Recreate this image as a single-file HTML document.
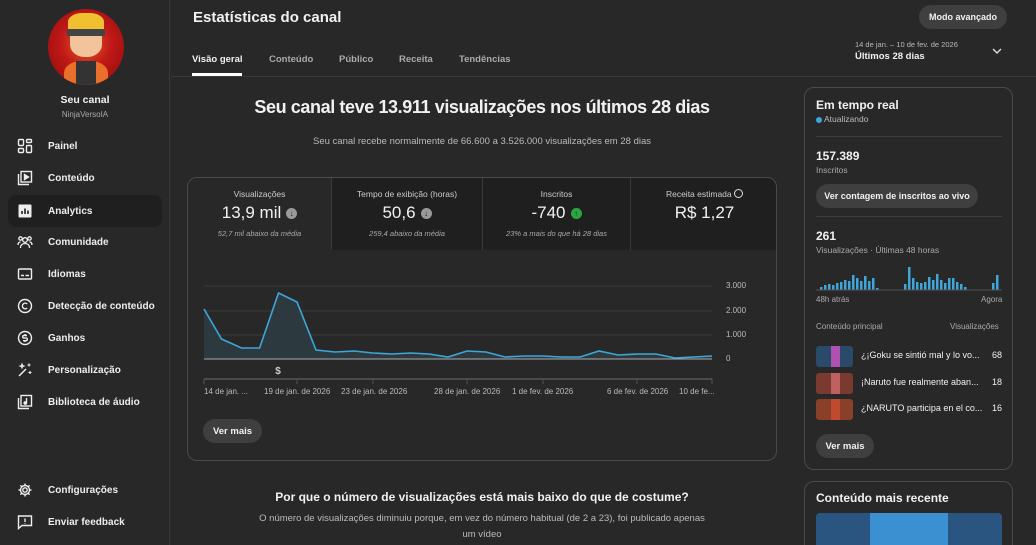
<!DOCTYPE html>
<html><head><meta charset="utf-8"><style>
*{box-sizing:border-box;margin:0;padding:0}
html,body{width:1036px;height:545px;overflow:hidden}
body{background:#282828;font-family:"Liberation Sans",sans-serif;color:#f1f1f1;position:relative;font-size:12px}
.abs{position:absolute}
.side{left:0;top:0;width:170px;height:545px;border-right:1px solid #3a3a3a}
.nav{position:absolute;left:8px;width:154px;height:32px;border-radius:8px;display:flex;align-items:center}
.nav svg{position:absolute;left:9px;width:16px;height:16px}
.nav span{position:absolute;left:40px;font-size:10px;font-weight:bold;color:#eee}
.btn{position:absolute;background:#3f3f3f;border-radius:14px;font-weight:bold;font-size:9.5px;display:flex;align-items:center;justify-content:center;color:#f1f1f1}
.tile{position:absolute;top:0;height:72px;text-align:center;background:#1f1f1f}
.tile .t{font-size:8.5px;color:#ccc;margin-top:11px}
.tile .v{font-size:17px;margin-top:4px;display:flex;justify-content:center;align-items:center;gap:5px}
.tile .s{font-size:7.5px;font-style:italic;color:#aaa;margin-top:6px}
.ic{width:11px;height:11px;border-radius:50%;display:inline-flex;align-items:center;justify-content:center;font-size:8px;font-weight:bold;color:#1f1f1f}
.xl{position:absolute;top:387px;font-size:8px;color:#bbb}
.yl{position:absolute;left:726px;font-size:8px;color:#bbb}
.row{position:absolute;left:816px;width:186px;height:20px}
.thumb{position:absolute;left:0;width:37px;height:21px;border-radius:3px}
</style></head><body>
<div class="abs side">
  <div class="abs" style="left:48px;top:9px;width:76px;height:76px;border-radius:50%;background:radial-gradient(circle at 50% 45%,#e06020 0,#c01818 45%,#8a0a0a 100%);overflow:hidden">
    <div class="abs" style="left:20px;top:4px;width:36px;height:22px;background:#f0c030;border-radius:40% 40% 10% 10%"></div>
    <div class="abs" style="left:22px;top:20px;width:32px;height:28px;background:#f3c49c;border-radius:30% 30% 45% 45%"></div>
    <div class="abs" style="left:19px;top:20px;width:38px;height:7px;background:#444"></div>
    <div class="abs" style="left:16px;top:52px;width:44px;height:30px;background:#e8702a;border-radius:40% 40% 0 0"></div>
    <div class="abs" style="left:28px;top:52px;width:20px;height:30px;background:#333"></div>
  </div>
  <div class="abs" style="left:0;width:170px;top:94px;text-align:center;font-weight:bold;font-size:10.5px">Seu canal</div>
  <div class="abs" style="left:0;width:170px;top:110px;text-align:center;font-size:8px;color:#aaa">NinjaVersoIA</div>
  <div class="nav" style="top:130px"><svg viewBox="0 0 16 16" fill="none" stroke="#eee" stroke-width="1.4"><rect x="1.5" y="1.5" width="5" height="6" rx="1"/><rect x="9.5" y="1.5" width="5" height="3" rx="1"/><rect x="1.5" y="10.5" width="5" height="4" rx="1"/><rect x="9.5" y="7.5" width="5" height="7" rx="1"/></svg><span>Painel</span></div>
  <div class="nav" style="top:162px"><svg viewBox="0 0 16 16" fill="none" stroke="#eee" stroke-width="1.4"><rect x="4" y="1.5" width="10.5" height="10.5"/><path d="M1.5 4v10.5H12"/><path d="M7.5 4.5v5l4-2.5z" fill="#eee"/></svg><span>Conteúdo</span></div>
  <div class="nav" style="top:195px;background:#1f1f1f"><svg viewBox="0 0 16 16"><rect x="1.5" y="1.5" width="13" height="13" rx="1" fill="#eee"/><path d="M5 11V8M8 11V5.5M11 11V7.5" stroke="#1f1f1f" stroke-width="1.6"/></svg><span>Analytics</span></div>
  <div class="nav" style="top:226px"><svg viewBox="0 0 16 16" fill="none" stroke="#eee" stroke-width="1.3"><circle cx="8" cy="6" r="2.3"/><circle cx="3.5" cy="4.5" r="1.7"/><circle cx="12.5" cy="4.5" r="1.7"/><path d="M3.5 14c0-3 2-4.5 4.5-4.5s4.5 1.5 4.5 4.5M1 11c0-2 1-3 2.5-3M15 11c0-2-1-3-2.5-3"/></svg><span>Comunidade</span></div>
  <div class="nav" style="top:258px"><svg viewBox="0 0 16 16" fill="none" stroke="#eee" stroke-width="1.4"><rect x="1.5" y="3" width="13" height="10" rx="1"/><path d="M4 9.5h3M8.5 9.5h3.5"/></svg><span>Idiomas</span></div>
  <div class="nav" style="top:290px"><svg viewBox="0 0 16 16" fill="none" stroke="#eee" stroke-width="1.4"><circle cx="8" cy="8" r="6.5"/><path d="M10.2 6a2.8 2.8 0 1 0 0 4"/></svg><span>Detecção de conteúdo</span></div>
  <div class="nav" style="top:322px"><svg viewBox="0 0 16 16" fill="none" stroke="#eee" stroke-width="1.4"><circle cx="8" cy="8" r="6.5"/><path d="M10 5.5H7a1.3 1.3 0 0 0 0 2.6h2a1.3 1.3 0 0 1 0 2.6H6M8 4v1.5M8 10.7V12"/></svg><span>Ganhos</span></div>
  <div class="nav" style="top:354px"><svg viewBox="0 0 16 16" fill="none" stroke="#eee" stroke-width="1.5"><path d="M2 14l7-7"/><path d="M5 2l.6 1.5L7 4l-1.4.6L5 6l-.6-1.4L3 4l1.4-.5z M12 1.5v3M10.5 3h3M13 9v3M11.5 10.5h3" stroke-width="1.1"/></svg><span>Personalização</span></div>
  <div class="nav" style="top:386px"><svg viewBox="0 0 16 16" fill="none" stroke="#eee" stroke-width="1.4"><rect x="4" y="1.5" width="10.5" height="10.5"/><path d="M1.5 4v10.5H12"/><path d="M9.5 4v5" /><circle cx="8.3" cy="9" r="1.2" fill="#eee"/></svg><span>Biblioteca de áudio</span></div>
  <div class="nav" style="top:474px"><svg viewBox="0 0 16 16" fill="none" stroke="#eee" stroke-width="1.4"><circle cx="8" cy="8" r="2.2"/><path d="M8 1.5v2M8 12.5v2M1.5 8h2M12.5 8h2M3.4 3.4l1.4 1.4M11.2 11.2l1.4 1.4M3.4 12.6l1.4-1.4M11.2 4.8l1.4-1.4"/><circle cx="8" cy="8" r="4.5"/></svg><span>Configurações</span></div>
  <div class="nav" style="top:506px"><svg viewBox="0 0 16 16" fill="none" stroke="#eee" stroke-width="1.4"><path d="M1.5 2h13v9.5H5l-3.5 3z"/><path d="M8 4.5v3.5M8 9.3v.4"/></svg><span>Enviar feedback</span></div>
</div>

<div class="abs" style="left:193px;top:9px;font-size:15px;font-weight:bold">Estatísticas do canal</div>
<div class="btn" style="left:919px;top:5px;width:88px;height:24px;font-size:9px">Modo avançado</div>
<div class="abs" style="left:192px;top:54px;font-size:9.5px;font-weight:bold">Visão geral</div>
<div class="abs" style="left:192px;top:73px;width:50px;height:3px;background:#fff"></div>
<div class="abs" style="left:269px;top:54px;font-size:9.5px;color:#aaa;font-weight:bold">Conteúdo</div>
<div class="abs" style="left:339px;top:54px;font-size:9.5px;color:#aaa;font-weight:bold">Público</div>
<div class="abs" style="left:399px;top:54px;font-size:9.5px;color:#aaa;font-weight:bold">Receita</div>
<div class="abs" style="left:459px;top:54px;font-size:9.5px;color:#aaa;font-weight:bold">Tendências</div>
<div class="abs" style="left:855px;top:40px;font-size:7.5px;color:#bbb">14 de jan. – 10 de fev. de 2026</div>
<div class="abs" style="left:855px;top:51px;font-size:9.5px;font-weight:bold">Últimos 28 dias</div>
<svg class="abs" style="left:991px;top:47px" width="12" height="9" viewBox="0 0 12 9"><path d="M2 2l4 4 4-4" stroke="#ddd" stroke-width="1.4" fill="none"/></svg>
<div class="abs" style="left:171px;top:76px;width:865px;height:1px;background:#3a3a3a"></div>

<div class="abs" style="left:188px;width:588px;top:97px;text-align:center;font-size:18px;font-weight:bold;letter-spacing:-0.4px">Seu canal teve 13.911 visualizações nos últimos 28 dias</div>
<div class="abs" style="left:188px;width:588px;top:136px;text-align:center;font-size:9.5px;color:#bbb">Seu canal recebe normalmente de 66.600 a 3.526.000 visualizações em 28 dias</div>

<div class="abs" style="left:187px;top:177px;width:590px;height:284px;border:1px solid #4a4a4a;border-radius:10px;overflow:hidden;background:#282828">
  <div class="tile" style="left:0;width:143px;background:#282828"><div class="t">Visualizações</div><div class="v">13,9 mil <span class="ic" style="background:#999">↓</span></div><div class="s">52,7 mil abaixo da média</div></div>
  <div class="tile" style="left:143px;width:151px;border-left:1px solid #3a3a3a"><div class="t">Tempo de exibição (horas)</div><div class="v">50,6 <span class="ic" style="background:#999">↓</span></div><div class="s">259,4 abaixo da média</div></div>
  <div class="tile" style="left:294px;width:148px;border-left:1px solid #3a3a3a"><div class="t">Inscritos</div><div class="v">-740 <span class="ic" style="background:#2ba640">↑</span></div><div class="s">23% a mais do que há 28 dias</div></div>
  <div class="tile" style="left:442px;width:148px;border-left:1px solid #3a3a3a"><div class="t">Receita estimada <span style="display:inline-block;width:9px;height:9px;border:1.2px solid #ddd;border-radius:50%;vertical-align:-1px"></span></div><div class="v">R$ 1,27</div></div>
</div>
<svg class="abs" style="left:0;top:0" width="1036" height="545">
  <g stroke="#3d3d3d" stroke-width="1"><line x1="204" y1="286" x2="712" y2="286"/><line x1="204" y1="311" x2="712" y2="311"/><line x1="204" y1="335" x2="712" y2="335"/></g>
  <polygon fill="#2c3a40" points="204,359 204,309 221.5,339 241.5,348 259.6,348 278.5,293 297,302 316,350 335,352 354,351 373,353 392,354 410.5,353 429,354 448,357 467,351 486,352 505,357 524,356 543,356 561.5,357 580,357 599,351 618,355 637,354 656,354 675,358 693.5,357 712,356 712,359"/>
  <line x1="204" y1="359" x2="712" y2="359" stroke="#aaa" stroke-width="1"/>
  <polyline fill="none" stroke="#3ea6d8" stroke-width="1.6" points="204,309 221.5,339 241.5,348 259.6,348 278.5,293 297,302 316,350 335,352 354,351 373,353 392,354 410.5,353 429,354 448,357 467,351 486,352 505,357 524,356 543,356 561.5,357 580,357 599,351 618,355 637,354 656,354 675,358 693.5,357 712,356"/>
  <line x1="204" y1="379" x2="712" y2="379" stroke="#4a4a4a" stroke-width="2"/>
  <g stroke="#555"><line x1="204" y1="379" x2="204" y2="384"/><line x1="297" y1="379" x2="297" y2="384"/><line x1="373" y1="379" x2="373" y2="384"/><line x1="467" y1="379" x2="467" y2="384"/><line x1="543" y1="379" x2="543" y2="384"/><line x1="637" y1="379" x2="637" y2="384"/><line x1="712" y1="379" x2="712" y2="384"/></g>
  <text x="278" y="374" fill="#ccc" font-size="10" font-weight="bold" text-anchor="middle" font-family="Liberation Sans">$</text>
</svg>
<div class="yl" style="top:281px">3.000</div><div class="yl" style="top:306px">2.000</div><div class="yl" style="top:330px">1.000</div><div class="yl" style="top:354px">0</div>
<div class="xl" style="left:204px">14 de jan. ...</div>
<div class="xl" style="left:264px">19 de jan. de 2026</div>
<div class="xl" style="left:341px">23 de jan. de 2026</div>
<div class="xl" style="left:434px">28 de jan. de 2026</div>
<div class="xl" style="left:512px">1 de fev. de 2026</div>
<div class="xl" style="left:607px">6 de fev. de 2026</div>
<div class="xl" style="left:679px">10 de fe...</div>
<div class="btn" style="left:203px;top:419px;width:59px;height:24px">Ver mais</div>

<div class="abs" style="left:188px;width:588px;top:490px;text-align:center;font-size:12px;font-weight:bold">Por que o número de visualizações está mais baixo do que de costume?</div>
<div class="abs" style="left:257px;width:450px;top:511px;text-align:center;font-size:9.5px;color:#bbb;line-height:16px">O número de visualizações diminuiu porque, em vez do número habitual (de 2 a 23), foi publicado apenas um vídeo</div>

<div class="abs" style="left:804px;top:87px;width:209px;height:383px;border:1px solid #4a4a4a;border-radius:10px"></div>
<div class="abs" style="left:816px;top:98px;font-size:12px;font-weight:bold">Em tempo real</div>
<div class="abs" style="left:816px;top:117px;width:6px;height:6px;border-radius:50%;background:#3ea6d8"></div>
<div class="abs" style="left:824px;top:114px;font-size:8.5px;color:#bbb">Atualizando</div>
<div class="abs" style="left:816px;top:136px;width:186px;height:1px;background:#3e3e3e"></div>
<div class="abs" style="left:816px;top:149px;font-size:12px;font-weight:bold">157.389</div>
<div class="abs" style="left:816px;top:165px;font-size:8.5px;color:#aaa">Inscritos</div>
<div class="btn" style="left:816px;top:184px;width:162px;height:24px;font-size:9px">Ver contagem de inscritos ao vivo</div>
<div class="abs" style="left:816px;top:216px;width:186px;height:1px;background:#3e3e3e"></div>
<div class="abs" style="left:816px;top:229px;font-size:12px;font-weight:bold">261</div>
<div class="abs" style="left:816px;top:245px;font-size:8.5px;color:#aaa">Visualizações · Últimas 48 horas</div>
<svg class="abs" style="left:816px;top:265px" width="186" height="26">
  <g fill="#3ea6d8">
  <rect x="4" y="22" width="2.5" height="3"/><rect x="8" y="20" width="2.5" height="5"/><rect x="12" y="19" width="2.5" height="6"/><rect x="16" y="20" width="2.5" height="5"/><rect x="20" y="18" width="2.5" height="7"/><rect x="24" y="17" width="2.5" height="8"/><rect x="28" y="15" width="2.5" height="10"/><rect x="32" y="16" width="2.5" height="9"/><rect x="36" y="10" width="2.5" height="15"/><rect x="40" y="13" width="2.5" height="12"/><rect x="44" y="16" width="2.5" height="9"/><rect x="48" y="11" width="2.5" height="14"/><rect x="52" y="16" width="2.5" height="9"/><rect x="56" y="13" width="2.5" height="12"/><rect x="60" y="23" width="2.5" height="2"/>
  <rect x="88" y="19" width="2.5" height="6"/><rect x="92" y="2" width="2.5" height="23"/><rect x="96" y="13" width="2.5" height="12"/><rect x="100" y="17" width="2.5" height="8"/><rect x="104" y="18" width="2.5" height="7"/><rect x="108" y="17" width="2.5" height="8"/><rect x="112" y="12" width="2.5" height="13"/><rect x="116" y="15" width="2.5" height="10"/><rect x="120" y="9" width="2.5" height="16"/><rect x="124" y="15" width="2.5" height="10"/><rect x="128" y="18" width="2.5" height="7"/><rect x="132" y="13" width="2.5" height="12"/><rect x="136" y="13" width="2.5" height="12"/><rect x="140" y="17" width="2.5" height="8"/><rect x="144" y="19" width="2.5" height="6"/><rect x="148" y="22" width="2.5" height="3"/>
  <rect x="176" y="18" width="2.5" height="7"/><rect x="180" y="10" width="2.5" height="15"/>
  </g><line x1="0" y1="25" x2="186" y2="25" stroke="#555"/>
</svg>
<div class="abs" style="left:816px;top:295px;font-size:8px;color:#aaa">48h atrás</div>
<div class="abs" style="left:981px;top:295px;font-size:8px;color:#aaa">Agora</div>
<div class="abs" style="left:816px;top:322px;font-size:8px;color:#aaa">Conteúdo principal</div>
<div class="abs" style="left:950px;top:322px;font-size:8px;color:#aaa">Visualizações</div>
<div class="row" style="top:346px"><div class="thumb" style="top:0;background:linear-gradient(90deg,#2a4a6a 0 40%,#b050b0 40% 65%,#2a4a6a 65%)"></div><div class="abs" style="left:45px;top:4px;font-size:9px">¿¡Goku se sintió mal y lo vo...</div><div class="abs" style="right:0;top:4px;font-size:9px">68</div></div>
<div class="row" style="top:373px"><div class="thumb" style="top:0;background:linear-gradient(90deg,#7a3a30 0 40%,#c06060 40% 65%,#7a3a30 65%)"></div><div class="abs" style="left:45px;top:4px;font-size:9px">¡Naruto fue realmente aban...</div><div class="abs" style="right:0;top:4px;font-size:9px">18</div></div>
<div class="row" style="top:399px"><div class="thumb" style="top:0;background:linear-gradient(90deg,#8a4028 0 40%,#c04a30 40% 65%,#8a4028 65%)"></div><div class="abs" style="left:45px;top:4px;font-size:9px">¿NARUTO participa en el co...</div><div class="abs" style="right:0;top:4px;font-size:9px">16</div></div>
<div class="btn" style="left:816px;top:434px;width:58px;height:24px">Ver mais</div>

<div class="abs" style="left:804px;top:481px;width:209px;height:80px;border:1px solid #4a4a4a;border-radius:10px"></div>
<div class="abs" style="left:816px;top:491px;font-size:12px;font-weight:bold">Conteúdo mais recente</div>
<div class="abs" style="left:816px;top:513px;width:186px;height:32px;border-radius:4px 4px 0 0;background:linear-gradient(90deg,#2a5580 0 29%,#3a90d0 29% 71%,#2a5580 71%)"></div>
</body></html>
